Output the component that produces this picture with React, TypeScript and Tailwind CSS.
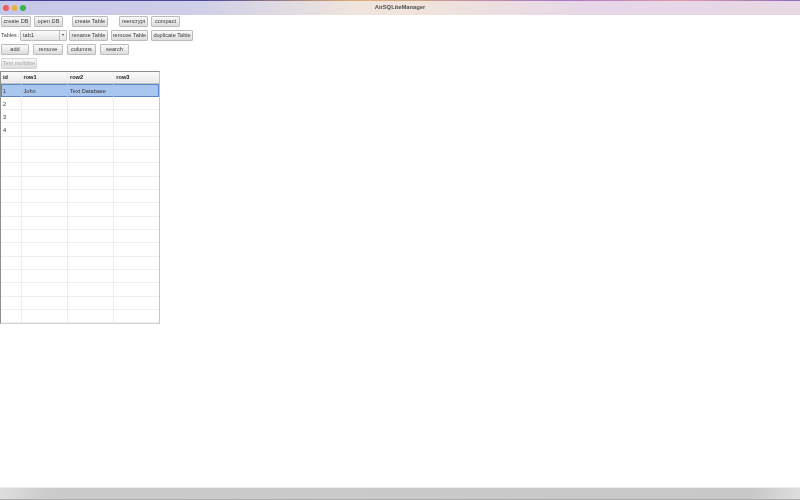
const rows = Array.from({ length: 18 }, (_, i) => i);

function Btn({ label, w, disabled }: { label: string; w: string; disabled?: boolean }) {
  return (
    <div
      className={`${w} h-[11px] shrink-0 rounded-[1px] border bg-gradient-to-b from-[#fafafa] to-[#dcdcdc] text-center whitespace-nowrap text-[5.6px] leading-[9px] ${
        disabled ? 'text-[#a8a8a8] border-[#d4d4d4]' : 'text-[#3a3a3a] border-[#bcbcbc]'
      }`}
    >
      {label}
    </div>
  );
}

function Cell({ w, children, bold, line }: { w: string; children?: React.ReactNode; bold?: boolean; line?: string }) {
  return (
    <div
      className={`${w} shrink-0 h-full pl-[2px] whitespace-nowrap text-[5.6px] border-r last:border-r-0 ${
        line ?? 'border-r-[#ededed]'
      } ${bold ? 'font-bold text-[#222] leading-[11px]' : 'text-[#333] leading-[14px]'}`}
    >
      {children}
    </div>
  );
}

export default function App() {
  return (
    <div className="w-[800px] h-[500px] flex flex-col overflow-hidden bg-white font-['Liberation_Sans',sans-serif]">
      {/* title bar */}
      <div className="h-[15px] shrink-0 relative flex items-center justify-center bg-[linear-gradient(90deg,#c6c7e9_0%,#cfcfe8_25%,#f0e5dc_45%,#efe3dc_55%,#e6d6e8_75%,#e8d8e4_100%)]">
        <div className="absolute left-0 right-0 top-0 h-px bg-[linear-gradient(90deg,#3f3c98_0%,#4a469c_25%,#e0b070_45%,#a878c8_70%,#e09aa8_85%,#8a6cc0_100%)]" />
        <div className="absolute left-[3px] top-[5px] flex gap-[3px] blur-[0.3px]">
          <div className="w-[5.5px] h-[5.5px] rounded-full bg-[#ec5f56]" />
          <div className="w-[5.5px] h-[5.5px] rounded-full bg-[#e9b13c]" />
          <div className="w-[5.5px] h-[5.5px] rounded-full bg-[#3bb54a]" />
        </div>
        <span className="text-[5.8px] font-bold text-[#4f4f4f] leading-[9px] blur-[0.25px]">AirSQLiteManager</span>
      </div>

      {/* toolbar rows */}
      <div className="pl-px pt-[0.5px] flex flex-col gap-[3px] shrink-0 blur-[0.3px]">
        <div className="flex h-[11px]">
          <Btn label="create DB" w="w-[30px]" />
          <div className="w-[3px]" />
          <Btn label="open DB" w="w-[29px]" />
          <div className="w-[9px]" />
          <Btn label="create Table" w="w-[36px]" />
          <div className="w-[11px]" />
          <Btn label="reencrypt" w="w-[29px]" />
          <div className="w-[3px]" />
          <Btn label="compact" w="w-[29px]" />
        </div>
        <div className="flex h-[11px]">
          <span className="w-[19px] shrink-0 whitespace-nowrap text-[5.4px] text-[#444] leading-[11px]">Tables :</span>
          <div className="w-[47px] h-[11px] shrink-0 flex rounded-[1px] border border-[#bcbcbc] bg-gradient-to-b from-[#fbfbfb] to-[#e4e4e4]">
            <span className="flex-1 pl-[2px] text-[5.6px] leading-[9px] text-[#333]">tab1</span>
            <div className="w-[7px] border-l border-l-[#bcbcbc] flex items-center justify-center">
              <div className="w-0 h-0 border-x-[1.5px] border-x-transparent border-t-[2px] border-t-[#333]" />
            </div>
          </div>
          <div className="w-[2px]" />
          <Btn label="rename Table" w="w-[39px]" />
          <div className="w-[3px]" />
          <Btn label="remove Table" w="w-[37px]" />
          <div className="w-[3px]" />
          <Btn label="duplicate Table" w="w-[42px]" />
        </div>
        <div className="flex h-[11px]">
          <Btn label="add" w="w-[28px]" />
          <div className="w-[4px]" />
          <Btn label="remove" w="w-[30px]" />
          <div className="w-[4px]" />
          <Btn label="columns" w="w-[29px]" />
          <div className="w-[4px]" />
          <Btn label="search" w="w-[29px]" />
        </div>
        <div className="flex h-[11px]">
          <Btn label="Text multiline" w="w-[36px]" disabled />
        </div>
      </div>

      {/* table */}
      <div className="w-[160px] h-[253px] mt-[2.5px] shrink-0 flex flex-col border border-[#8f8f8f] border-r-[#b7c6dc] border-b-[#d2d2d2] blur-[0.25px]">
        <div className="h-[11.5px] shrink-0 flex bg-gradient-to-b from-[#fafafa] to-[#e9e9e9] border-b border-b-[#c4c4c4]">
          <Cell w="w-[20.5px]" bold>id</Cell>
          <Cell w="w-[46.5px]" bold>row1</Cell>
          <Cell w="w-[46.3px]" bold>row2</Cell>
          <Cell w="w-[44.7px]" bold>row3</Cell>
        </div>
        {rows.map((i) => {
          const line = i === 0 ? 'border-r-[#a9c6ee]' : undefined;
          return (
            <div
              key={i}
              className={`h-[13.33px] shrink-0 flex ${
                i === 0
                  ? 'bg-[#a9c6ee] shadow-[inset_0_0_0_1px_#5b84c4]'
                  : 'border-b border-b-[#efefef]'
              }`}
            >
              <Cell w="w-[20.5px]" line={line}>{i < 4 ? i + 1 : ''}</Cell>
              <Cell w="w-[46.5px]" line={line}>{i === 0 ? 'John' : ''}</Cell>
              <Cell w="w-[46.3px]" line={line}>{i === 0 ? 'Text Database' : ''}</Cell>
              <Cell w="w-[44.7px]" line={line} />
            </div>
          );
        })}
      </div>

      <div className="flex-1" />

      {/* bottom bar */}
      <div className="h-[13px] shrink-0 border-t border-t-[#ececec] bg-[linear-gradient(90deg,#dedede_0%,#cbcbcb_6%,#c8c8c8_94%,#dedede_100%)] border-b border-b-[#ababab]" />
    </div>
  );
}
